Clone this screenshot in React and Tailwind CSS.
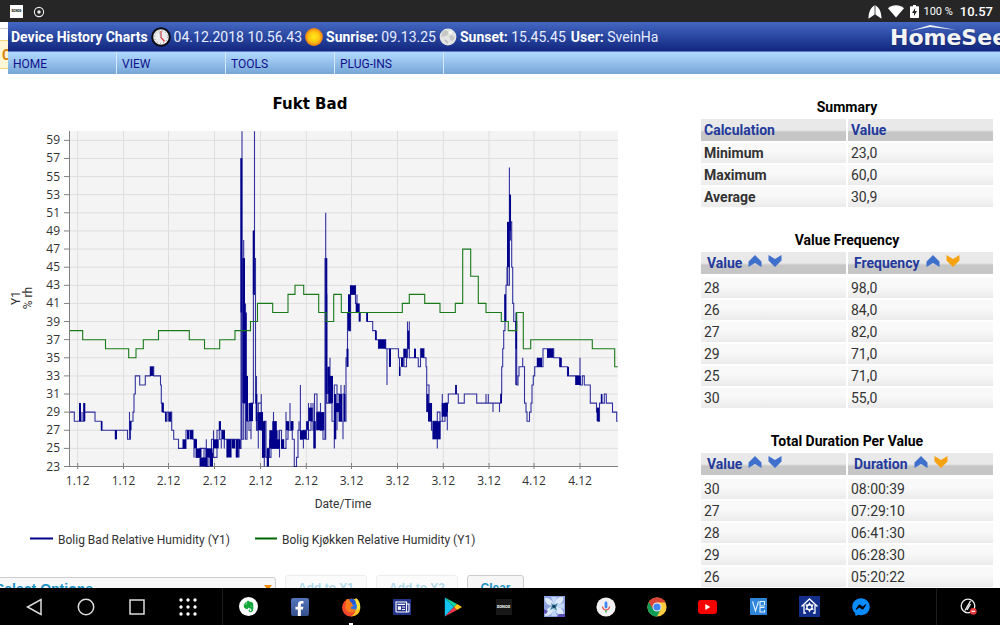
import { FaEvernote, FaFacebookF, FaFacebookMessenger } from "react-icons/fa";

// Plot geometry, in svg units
const X0 = 70;
const X1 = 618;
const yOf = (v) => 466.5 - (v - 23) * 9.06;

const yTicks = [59, 57, 55, 53, 51, 49, 47, 45, 43, 41, 39, 37, 35, 33, 31, 29, 27, 25, 23];
const xTicks = [
    [77.7, "1.12"], [123.5, "1.12"], [168.5, "2.12"], [214.5, "2.12"],
    [260.5, "2.12"], [306.3, "2.12"], [351.5, "3.12"], [397.5, "3.12"],
    [443.3, "3.12"], [489, "3.12"], [534, "4.12"], [580, "4.12"],
];

// Each point: x, then every value visited at that x
const kitchen = [
    [70, 38], [82.7, 37], [105.5, 36], [128.7, 35], [136, 36], [143.3, 37], [158.5, 38],
    [189.3, 37], [204.5, 36], [219.7, 37], [235, 38], [250.5, 39], [257.5, 41], [272.7, 40],
    [288, 42], [295, 43], [303.7, 42], [318.7, 40], [326, 39], [333.7, 42], [341.3, 40],
    [402.3, 41], [409.3, 42], [424.7, 41], [440, 40], [455.3, 41], [462.7, 47], [470.7, 44],
    [478.3, 41], [486, 40], [501.3, 39], [508.3, 38], [516.7, 40], [523.3, 36], [530.7, 37],
    [592.3, 36], [614.7, 34], [617.7, 34],
];

const bathroom = [
    [70, 29], [74.3, 28], [79.7, 30, 28], [82, 29, 28], [84, 30, 29], [95, 28], [101.3, 27],
    [115.3, 26, 27], [127.5, 26], [129.5, 29, 26], [130.5, 28], [133, 29], [134, 31],
    [135.3, 33], [139.7, 32], [145.3, 33], [150.3, 34], [153.7, 33], [160.5, 32], [161.3, 30],
    [163, 29], [165.5, 28], [167, 29], [169, 28], [170.7, 29], [171.7, 27], [173.7, 26],
    [178.5, 25], [186, 26, 25, 27], [193, 26], [194, 24, 26], [196, 25, 24], [200, 23, 25],
    [204, 23, 25], [206.3, 26, 23], [209, 25, 24], [211.5, 23, 26], [213.5, 27, 24], [217, 24, 27],
    [219.3, 28, 26], [221.3, 25, 27], [224.3, 25, 26], [227, 24, 26], [231, 24, 26],
    [234, 25, 26], [237, 24, 26], [239, 24, 26, 25], [241, 57], [242, 60, 26],
    [243.7, 48, 30], [245.5, 41, 26], [247, 33, 28], [249, 30, 27], [251, 26, 30], [253.4, 49],
    [254.5, 60, 42], [255.5, 46, 30], [256.5, 33, 27], [258.3, 25, 30], [261.3, 31, 27],
    [262.5, 29, 24], [264.3, 23, 28], [266, 28, 24], [268, 23, 25], [269.5, 26, 24],
    [271, 27, 25], [273.5, 29, 25], [275.5, 28, 25], [278, 27, 25], [279.5, 24, 27],
    [281.5, 27, 25], [283.7, 26, 25], [286, 29, 26], [288, 28, 27], [290, 30, 27],
    [292.3, 28, 26], [294.3, 23], [296.5, 24], [298, 27], [299, 28, 27], [300.4, 32, 26],
    [303.4, 25, 27], [306.5, 28, 26], [308.5, 30, 27], [311, 30, 28], [313, 30, 27],
    [314.5, 25, 31], [317, 27, 29], [320.5, 30, 27], [323, 29, 26], [325, 46, 26],
    [325.7, 51, 42], [326.8, 42, 30], [328.5, 34, 30], [330, 35, 30], [332, 33, 28],
    [334.3, 25, 32], [337, 27, 31], [339, 30, 28], [341, 32, 28], [343, 26, 31],
    [344.3, 32, 28], [346, 31, 35], [347.5, 34, 40], [349, 42, 38], [350.5, 43, 42],
    [355.5, 43, 41], [357, 42, 40], [359.5, 39, 40], [367, 39], [372.7, 38], [375.5, 37],
    [378.5, 36, 37], [385.7, 36], [387, 32, 36], [389.5, 34, 36], [398.5, 35], [399.5, 33, 35],
    [402, 34, 35], [404, 36, 34], [406.5, 36, 35], [407.5, 39, 36], [409.3, 39, 35],
    [414.7, 36, 35], [418.3, 34], [420.5, 35, 36], [424, 35], [426, 34], [426.7, 29, 32],
    [429, 31, 28], [431.5, 30, 27], [433, 26, 28], [437.3, 25, 29], [440, 26, 28],
    [442.3, 31, 28], [445, 28, 30], [447.3, 27, 30], [448.3, 31], [455.7, 32, 31], [458.3, 30],
    [464.3, 31], [476.7, 30], [486, 31, 30], [488.3, 31, 30], [493, 29, 30], [499.5, 29, 30],
    [501, 31], [501.7, 34], [502.7, 36], [503.7, 38], [505, 42, 39], [506, 43], [507, 45],
    [507.7, 50, 43], [509.4, 56, 48], [510.5, 53, 50], [511.7, 45], [512.7, 41], [513.7, 39],
    [515.7, 32, 39], [516.7, 32], [518, 33], [519, 34], [522.7, 35, 34], [524.5, 30],
    [526, 29], [527, 28], [529.5, 29], [531, 30], [532, 32], [533.3, 33], [534.7, 34],
    [537.3, 35, 34], [541, 35, 34], [543, 36], [548, 35, 36], [553.7, 35], [560, 34],
    [567.5, 33], [576, 32, 33], [580, 35, 32], [582.3, 33], [584.3, 32], [590.3, 30],
    [596.5, 29], [598, 28], [599.5, 30], [601.3, 31, 30], [604.3, 31], [606.3, 30],
    [612.5, 29], [616.7, 28], [617.7, 28],
];

// Solid stretches where the bathroom sensor toggles quickly: x, width, low, high
const bathroomFill = [
    [79, 2, 28, 30], [83.3, 2, 28, 30], [101, 1.5, 27, 28], [115, 2, 26, 27], [129.5, 2, 27, 28],
    [150, 3.5, 33, 34], [161.5, 2.3, 29, 30], [165, 1.6, 28, 29], [168.5, 2.5, 28, 29],
    [182.5, 3.5, 25, 26], [187, 2.5, 26, 27], [190, 3, 26, 27], [194, 3, 25, 26],
    [196, 5.5, 24, 25], [200, 7.5, 23, 24], [205.5, 2, 23, 25], [207, 5.5, 24, 25],
    [210, 3, 23, 24.5], [213, 5.7, 25, 26], [219, 2, 27, 28], [222, 3, 26, 27],
    [226.7, 4.5, 24, 26], [231.7, 3.5, 25, 26], [235.7, 3, 24, 26], [238.7, 2, 25, 26],
    [240.5, 1.8, 40, 57], [242.3, 2.7, 30, 46], [244, 2.8, 30, 40], [246, 2, 28, 33],
    [249, 4, 28, 30], [252.8, 1.8, 42, 49], [255.7, 1.7, 28, 31], [257.3, 3, 27, 29],
    [260, 3, 27, 29], [262, 3.5, 24, 28], [266.7, 2.3, 23, 25], [269.3, 8, 25, 27],
    [272.3, 4.5, 26, 28], [277, 3, 25, 26], [281, 3, 25, 26], [286, 3, 27, 28], [290.5, 3, 27, 28],
    [300, 6.3, 26, 27], [306.5, 2, 27, 28], [308.7, 4, 28, 29.5], [313.3, 2.5, 25, 28],
    [316.3, 8, 27, 29], [325.5, 1.8, 31, 46], [327.3, 2.5, 31, 34], [329, 4, 30, 33],
    [334, 2.3, 26, 31], [336, 6, 29, 30], [339, 3, 28, 31], [344, 1.5, 28, 31],
    [346.5, 2, 34, 36], [348, 2.5, 38, 42], [350, 5.7, 42, 43], [355.7, 4, 40, 41],
    [358.7, 2, 39, 40], [366.3, 1.7, 39, 40], [375.3, 1.5, 37, 38], [378.3, 7.5, 36, 37],
    [389, 2, 34, 36], [399, 1.5, 33, 34], [401, 2.5, 34, 35], [403.5, 3, 35, 36],
    [407.5, 1.8, 36, 38], [414, 2, 35, 36], [421, 3, 35, 36], [426.7, 2, 29, 31],
    [428, 4, 28, 30], [432.7, 7.7, 26, 28], [441.7, 5.5, 28.5, 30], [445, 3, 29, 30],
    [455.3, 1.6, 31, 32], [500.3, 1.7, 30, 31], [504.3, 1.6, 39, 42], [507, 2.5, 45, 50],
    [509.3, 1.7, 49, 53], [515.5, 1.5, 36, 40], [537, 5, 34, 35], [547, 6.5, 35, 36],
    [559.3, 2.5, 34, 35], [567.3, 1.7, 33, 34], [575.3, 5.5, 32, 33], [596.7, 2.5, 28, 29.5],
    [601, 1.5, 30, 31],
];

function toPath(points) {
    return points
        .map(([x, ...values], i) => {
            const rest = values.map((v) => `V${yOf(v).toFixed(1)}`).join("");
            return i === 0 ? `M${x} ${yOf(values[0]).toFixed(1)}` : `H${x}${rest}`;
        })
        .join("");
}

const summary = [["Minimum", "23,0"], ["Maximum", "60,0"], ["Average", "30,9"]];
const frequency = [["28", "98,0"], ["26", "84,0"], ["27", "82,0"], ["29", "71,0"], ["25", "71,0"], ["30", "55,0"]];
const duration = [["30", "08:00:39"], ["27", "07:29:10"], ["28", "06:41:30"], ["29", "06:28:30"], ["26", "05:20:22"]];

const headClass = "h-[22px] w-1/2 bg-linear-to-b from-[#e9e9e9] from-50% to-[#c6c6c6] to-60% p-0 text-left font-bold text-[#233a9c]";
const cellClass = "h-5 bg-linear-to-b from-[#f9f9f9] from-40% to-[#ebebeb] p-0 pl-[3px] leading-5";

function StatusBar() {
    return (
        <div className="flex h-[22px] shrink-0 items-center bg-[#262626] pt-px pr-[7px] pl-[10px] text-white">
            <span className="flex h-[13px] w-[13px] items-center justify-center bg-white text-[3px] font-bold text-black">SONOS</span>
            <svg className="ml-[10px] h-3 w-3" viewBox="0 0 12 12" fill="none" stroke="#eee">
                <circle cx="6" cy="6" r="4.6" strokeWidth="1.1" />
                <circle cx="6" cy="6" r="1.7" fill="#eee" stroke="none" />
            </svg>
            <div className="ml-auto flex items-center">
                <svg className="h-[14px] w-[14px]" viewBox="0 0 14 14" fill="#fff">
                    <path d="M6.6 .3C3 2.5 .6 6 .5 13.8L6.6 9.4zM7.4 .3c3.6 2.2 6 5.7 6.1 13.5L7.4 9.4z" />
                </svg>
                <svg className="ml-[6px] h-[13px] w-4" viewBox="0 0 16 13" fill="#fff">
                    <path d="M8 12.6L0 3.2C4.6-.6 11.4-.6 16 3.2z" />
                </svg>
                <svg className="ml-[6px] h-[13px] w-[9px]" viewBox="0 0 9 13">
                    <path d="M3 0h3v1.3h2.3q.7 0 .7.7v10.3q0 .7-.7.7H.7q-.7 0-.7-.7V2q0-.7.7-.7H3z" fill="#fff" />
                    <path d="M5.2 3L2 8h2v3l3-5H5z" fill="#262626" />
                </svg>
                <span className="ml-1 pt-px text-[11px] leading-4">100 %</span>
                <span className="ml-[7px] pt-px text-[13px] leading-4 font-medium">10.57</span>
            </div>
        </div>
    );
}

function ClockIcon() {
    return (
        <svg className="h-5 w-5" viewBox="0 0 20 20">
            <circle cx="10" cy="10" r="8.8" fill="#ededed" stroke="#0b0b14" strokeWidth="2" />
            <circle cx="10" cy="10" r="6.4" fill="none" stroke="#777" strokeDasharray=".8 2.55" />
            <path d="M10 4v6.5l3.5 4" fill="none" stroke="#e03a3a" strokeWidth="1.2" />
            <path d="M10 10.5L8.6 5" stroke="#999" strokeWidth=".8" />
        </svg>
    );
}

function SunIcon() {
    return (
        <svg className="h-[18px] w-[18px]" viewBox="0 0 18 18">
            <defs>
                <radialGradient id="sun">
                    <stop offset="0" stopColor="#ffe81a" />
                    <stop offset=".6" stopColor="#ffc410" />
                    <stop offset="1" stopColor="#f07a18" />
                </radialGradient>
            </defs>
            <circle cx="9" cy="9" r="8.9" fill="url(#sun)" />
        </svg>
    );
}

function MoonIcon() {
    return (
        <svg className="h-[18px] w-[18px]" viewBox="0 0 18 18">
            <circle cx="9" cy="9" r="8.4" fill="#e4e4e4" />
            <path d="M4 3q4-2 5 1t-3 4-4 0zM10 8q4-2 5 1t-3 4zM5 12q3-1 4 2t-2 1z" fill="#c6c6c6" />
            <circle cx="11.5" cy="4.5" r="1.6" fill="#f8f8f8" />
        </svg>
    );
}

function Header() {
    return (
        <div className="flex min-w-0 flex-1 flex-col">
            <div className="flex h-[30px] items-center overflow-hidden border-b border-[#5a7cc6] bg-linear-to-b from-[#4468c3] to-[#13267f] pl-[3px] text-sm whitespace-nowrap text-[#e8edff]">
                <h1 className="font-bold text-white">Device History Charts</h1>
                <div className="ml-[3px] flex items-center gap-[3px]">
                    <ClockIcon />
                    <span>04.12.2018 10.56.43</span>
                </div>
                <div className="ml-[3px] flex items-center gap-[3px]">
                    <SunIcon />
                    <span><b className="text-white">Sunrise:</b> 09.13.25</span>
                </div>
                <div className="ml-[3px] flex items-center gap-[3px]">
                    <MoonIcon />
                    <span><b className="text-white">Sunset:</b> 15.45.45</span>
                </div>
                <span className="ml-[5px]"><b className="text-white">User:</b> SveinHa</span>
                {/* Logo, runs past the right edge */}
                <div className="relative ml-auto w-[110px] shrink-0 overflow-hidden pt-[2px] font-['DejaVu_Sans',sans-serif] text-[22px] leading-7 font-bold text-[#f4f4f4] text-shadow-md">
                    HomeSeer
                    <svg className="absolute top-[3px] left-5 h-[6px] w-12" viewBox="0 0 48 6">
                        <path d="M0 6L20 0L46 5L20 2z" fill="#f4f4f4" />
                    </svg>
                </div>
            </div>
            <nav className="flex h-[22px] bg-linear-to-b from-[#b2daff] to-[#76a6d6] text-xs leading-6 text-[#10108c]">
                {["HOME", "VIEW", "TOOLS", "PLUG-INS"].map((item) => (
                    <a key={item} href="#" className="w-[109px] border-r border-[#d4e8fc] pl-[5px]">
                        {item}
                    </a>
                ))}
            </nav>
        </div>
    );
}

function Chart() {
    return (
        <svg className="h-[440px] w-[640px] shrink-0 font-['Open_Sans',sans-serif] text-xs" viewBox="0 120 640 440" fill="#333">
            <rect x={X0} y="131" width={X1 - X0} height="336" fill="#f4f4f4" />
            {yTicks.map((v) => (
                <g key={v}>
                    <line x1={X0} x2={X1} y1={yOf(v)} y2={yOf(v)} stroke="#dedede" />
                    <line x1="64" x2={X0} y1={yOf(v)} y2={yOf(v)} stroke="#808080" />
                    <text x="60" y={yOf(v) + 4} textAnchor="end">{v}</text>
                </g>
            ))}
            {xTicks.map(([x, label]) => (
                <g key={x}>
                    <line x1={x} x2={x} y1="131" y2="466" stroke="#dedede" />
                    <line x1={x} x2={x} y1="463" y2="469" stroke="#808080" />
                    <text x={x} y="485" textAnchor="middle">{label}</text>
                </g>
            ))}
            <path d="M69.5 131V466.5H618" fill="none" stroke="#808080" />
            <path d={toPath(bathroom)} fill="none" stroke="#00008b" strokeOpacity=".8" strokeWidth="1.1" />
            {bathroomFill.map(([x, w, low, high], i) => (
                <rect key={i} x={x} y={yOf(high)} width={w} height={yOf(low) - yOf(high)} fill="#00008b" />
            ))}
            <path d={toPath(kitchen)} fill="none" stroke="#187a18" strokeWidth="1.1" />

            <g className="font-[Roboto,sans-serif]">
                <text x="343" y="508" textAnchor="middle">Date/Time</text>
                <text transform="translate(20 298) rotate(-90)" textAnchor="middle">Y1</text>
                <text transform="translate(32 298) rotate(-90)" textAnchor="middle">% rh</text>
                <line x1="30" x2="53" y1="538.5" y2="538.5" stroke="#00008b" strokeWidth="2" />
                <text x="58" y="544">Bolig Bad Relative Humidity (Y1)</text>
                <line x1="255" x2="277" y1="538.5" y2="538.5" stroke="#006400" strokeWidth="2" />
                <text x="282" y="544">Bolig Kjøkken Relative Humidity (Y1)</text>
            </g>
        </svg>
    );
}

function Chevron({ down, orange }) {
    return (
        <svg className={down ? "h-3 w-[14px] rotate-180" : "h-3 w-[14px]"} viewBox="0 0 14 12">
            <path d="M7 0L13.5 6.5V12L7 8L.5 12V6.5z" fill={orange ? "#f5a312" : "#3f70cc"} />
        </svg>
    );
}

function SortHead({ label, active }) {
    return (
        <th scope="col" className={headClass}>
            <div className="flex items-center pl-[6px]">
                {label}
                <button type="button" aria-label={`Sort ${label} ascending`} className="-mt-1 ml-[6px]">
                    <Chevron />
                </button>
                <button type="button" aria-label={`Sort ${label} descending`} className="-mt-1 ml-[6px]">
                    <Chevron down orange={active} />
                </button>
            </div>
        </th>
    );
}

function SortTable({ title, column, rows }) {
    return (
        <section className="mt-[21px]">
            <h2 className="text-center leading-5 font-bold text-black">{title}</h2>
            <table className="w-full table-fixed border-separate border-spacing-[2px]">
                <thead>
                    <tr>
                        <SortHead label="Value" />
                        <SortHead label={column} active />
                    </tr>
                    <tr />
                </thead>
                <tbody>
                    {rows.map(([value, total]) => (
                        <tr key={value}>
                            <td className={cellClass}>{value}</td>
                            <td className={cellClass}>{total}</td>
                        </tr>
                    ))}
                </tbody>
            </table>
        </section>
    );
}

const uiButton = "h-[26px] rounded-[3px] border border-[#ccc] bg-[#f6f6f6] text-xs font-bold text-[#1c94c4] disabled:opacity-35";

function ChartControls() {
    return (
        <div className="-ml-[6px] flex items-start gap-[9px] pt-[15px] font-['Liberation_Sans',sans-serif]">
            <div className="relative mt-[2px] w-[282px]">
                <select aria-label="Options" className="block h-6 w-full appearance-none rounded-[3px] border border-[#ccc] bg-[#f8f8f8] text-sm font-bold text-[#1c94c4]">
                    <option>Select Options</option>
                </select>
                <svg className="pointer-events-none absolute top-2 right-1 h-[5px] w-2" viewBox="0 0 8 5">
                    <path d="M0 0h8L4 5z" fill="#ef8c08" />
                </svg>
            </div>
            <button type="button" disabled className={`${uiButton} w-[82px]`}>Add to Y1</button>
            <button type="button" disabled className={`${uiButton} w-[82px]`}>Add to Y2</button>
            <button type="button" className={`${uiButton} w-[57px]`}>Clear</button>
        </div>
    );
}

const dots = [2, 9, 16];

const systemKeys = [
    ["Back", <path key="b" d="M16 2.5V17.5L2.5 10z" fill="none" stroke="#ddd" strokeWidth="1.5" />],
    ["Home", <circle key="h" cx="10" cy="10" r="7.7" fill="none" stroke="#ddd" strokeWidth="1.5" />],
    ["Recents", <rect key="r" x="3" y="3" width="14" height="14" fill="none" stroke="#ddd" strokeWidth="1.5" />],
    ["All apps", dots.map((x) => dots.map((y) => <circle key={`${x}-${y}`} cx={x + 1} cy={y + 1} r="1.7" fill="#fff" />))],
];

const apps = [
    ["Evernote", (
        <span className="flex h-[19px] w-[19px] items-center justify-center rounded-full bg-white text-[#14a83c]">
            <FaEvernote size={13} />
        </span>
    )],
    ["Facebook", (
        <span className="flex h-[18px] w-[18px] items-end justify-end rounded-[2px] bg-linear-to-b from-[#5576bd] to-[#35508d] pr-[2px] text-white">
            <FaFacebookF size={15} />
        </span>
    )],
    ["Firefox", (
        <svg className="h-5 w-5" viewBox="0 0 20 20">
            <circle cx="10" cy="10.6" r="9" fill="#f8492c" />
            <path d="M12 1.5Q19.8 4 19.2 11.5T10 19.6Q15 17 14.6 9z" fill="#ffc420" />
            <path d="M15.2 1q5 4 3.8 11l-4 1L12.5 4z" fill="#ffe03a" />
            <circle cx="10.4" cy="9.4" r="5.6" fill="#2a6fe8" />
            <path d="M5 2.5Q9.5 1 12 4L11 7.5 13 9q-3 0-3.5 2.2 3 2.2 5 .2-.6 4.2-5 4.2Q5 15 4.4 10z" fill="#ff7a18" />
            <path d="M8 2.2q5-1.6 7 3L13 7.6 9.5 5z" fill="#1f55d0" />
        </svg>
    )],
    ["News", (
        <svg className="h-4 w-[18px]" viewBox="0 0 18 16">
            <rect width="18" height="16" rx="1" fill="#25358c" />
            <path d="M3 3h10.5v10H4q-1 0-1-1zM13.5 5H16v7q0 1-1.2 1H13" fill="none" stroke="#fff" strokeWidth="1.1" />
            <path d="M4.5 5.4h7.5M9 8h3M9 10.5h3" stroke="#fff" strokeWidth="1.1" />
            <path d="M4.8 7.3h3.2v3.5H4.8z" fill="#fff" />
        </svg>
    )],
    ["Play Store", (
        <svg className="h-5 w-[18px]" viewBox="0 0 18 20">
            <path d="M.8.5L10 10 .8 19.5z" fill="#13c3f0" />
            <path d="M.8.5L13 7l-3 3z" fill="#12d6a0" />
            <path d="M.8 19.5L13 13l-3-3z" fill="#f0384a" />
            <path d="M13 7l5 3-5 3-3-3z" fill="#ffc81a" />
        </svg>
    )],
    ["Sonos", <span className="flex h-4 w-4 items-center justify-center bg-[#171717] text-[4px] font-bold text-white">SONOS</span>],
    ["Gallery", (
        <svg className="h-[21px] w-[21px]" viewBox="0 0 21 21">
            <rect width="21" height="21" fill="#8da3e0" />
            <path d="M10 10Q0 9 1 2q7-1 9 8Q11 0 19 1q2 7-9 9 10 1 10 9-8 1-10-8-1 9-9 9 0-9 9-10z" fill="#dce9fb" />
            <path d="M10 9L7 1h6zM11 10l9-3v6zM10 12l3 8H7z" fill="#c3d8f6" />
            <path d="M0 13l4 2-2 3-2-1zM15 18l6 0v3h-8z" fill="#5a4fb8" />
            <path d="M7 7l3 2 4-2-2 4 1 4-3-3-4 2 2-4z" fill="#357f96" />
            <circle cx="10" cy="10.5" r="1.4" fill="#17345e" />
        </svg>
    )],
    ["Voice Search", (
        <svg className="h-5 w-5" viewBox="0 0 20 20">
            <circle cx="10" cy="10" r="9.6" fill="#f1f1f1" />
            <path d="M6.5 9.5Q7 13 10 13t3.5-3.5" fill="none" stroke="#ea4335" strokeWidth="1.2" />
            <rect x="8.6" y="4.5" width="2.8" height="7" rx="1.4" fill="#4285f4" />
            <path d="M10 13v2.5" stroke="#34a853" strokeWidth="1.4" />
        </svg>
    )],
    ["Chrome", (
        <svg className="h-5 w-5" viewBox="0 0 20 20">
            <circle cx="10" cy="10" r="9.6" fill="#ffcd40" />
            <path d="M10 10L1.7 5.2A9.6 9.6 0 0 0 10 19.6l3.7-7z" fill="#0f9d58" />
            <path d="M10 5.6h8.5A9.6 9.6 0 0 0 1.7 5.2L6 12z" fill="#db4437" />
            <circle cx="10" cy="10" r="4.5" fill="#f1f1f1" />
            <circle cx="10" cy="10" r="3.6" fill="#4285f4" />
        </svg>
    )],
    ["YouTube", (
        <svg className="h-[14px] w-[19px]" viewBox="0 0 19 14">
            <rect width="19" height="14" rx="3" fill="#f60000" />
            <path d="M7.3 4v6l5-3z" fill="#fff" />
        </svg>
    )],
    ["VLC Remote", (
        <svg className="h-[17px] w-[17px]" viewBox="0 0 17 17">
            <rect width="17" height="17" rx="1" fill="#2f86d9" />
            <path d="M2.5 3.5L5.5 13 8.5 3.5M14.5 7V3.5H10V8h4.5M14.5 9.5H10V14h4.5v-2" fill="none" stroke="#e4f1ff" strokeWidth="1.1" />
        </svg>
    )],
    ["HomeSeer", (
        <svg className="h-[21px] w-[21px]" viewBox="0 0 21 21">
            <rect width="21" height="21" fill="#142f8c" />
            <path d="M2.5 10.5L10.5 3l8 7.5M5 9v8h2M16 9v8h-2" fill="none" stroke="#fff" strokeWidth="1.3" />
            <path d="M10.5 6l1.3 2.3 2.9.1-1.2 2.7 1.2 2.7-2.9.1-1.3 2.6-1.3-2.6-2.9-.1 1.2-2.7-1.2-2.7 2.9-.1z" fill="#fff" />
            <circle cx="10.5" cy="11.2" r="1.8" fill="#142f8c" />
        </svg>
    )],
    ["Messenger", (
        <span className="text-[#0a8cff]">
            <FaFacebookMessenger size={18} />
        </span>
    )],
];

function BottomBar() {
    return (
        <footer className="flex h-[37px] shrink-0 bg-black">
            <div className="flex w-[223px] border-r border-[#1c1c1c] pl-[9px]">
                {systemKeys.map(([label, icon]) => (
                    <button key={label} type="button" aria-label={label} className="flex w-[51px] items-center justify-center">
                        <svg className="h-5 w-5" viewBox="0 0 20 20">{icon}</svg>
                    </button>
                ))}
            </div>
            <div className="flex flex-1">
                {apps.map(([label, icon]) => (
                    <button key={label} type="button" aria-label={label} className="relative flex w-[51px] items-center justify-center">
                        {icon}
                        {label === "Firefox" && <span className="absolute bottom-0 h-[2px] w-1 bg-white" />}
                    </button>
                ))}
            </div>
            <button type="button" aria-label="Do not disturb" className="flex w-16 items-center justify-center border-l border-[#1c1c1c]">
                <svg className="h-[17px] w-[17px]" viewBox="0 0 17 17">
                    <circle cx="8" cy="8" r="6.8" fill="none" stroke="#eee" strokeWidth="1.3" />
                    <path d="M10.5 3L5 12.5M7 12l3.5-6" stroke="#eee" strokeWidth="1.4" />
                    <circle cx="13.3" cy="13.3" r="3.4" fill="#e83a3a" />
                    <path d="M11.5 13.3h3.6" stroke="#fff" strokeWidth="1.2" />
                </svg>
            </button>
        </footer>
    );
}

function App() {
    return (
        <div className="flex h-screen flex-col overflow-hidden bg-white font-[Roboto,sans-serif] text-sm text-[#333]">
            <StatusBar />
            <div className="flex shrink-0">
                {/* Edge of the page underneath */}
                <div className="h-[52px] w-2 overflow-hidden">
                    <div className="h-[7px] border-b border-[#ccc]" />
                    <div className="mt-[11px] h-[29px] border-y border-[#f6da78] bg-[#fff7d6] pl-[2px] leading-7 font-bold text-[#d9820f]">C</div>
                </div>
                <Header />
            </div>

            <main className="flex min-h-0 flex-1 overflow-hidden">
                <div className="min-w-0 flex-1">
                    <h2 className="h-[46px] w-[620px] pt-5 text-center font-['DejaVu_Sans',sans-serif] text-[15px] leading-5 font-bold text-black">
                        Fukt Bad
                    </h2>
                    <Chart />
                    <ChartControls />
                </div>

                <div className="mr-[5px] w-[296px] shrink-0 pt-[23px]">
                    <section>
                        <h2 className="text-center leading-5 font-bold text-black">Summary</h2>
                        <table className="w-full table-fixed border-separate border-spacing-[2px]">
                            <thead>
                                <tr>
                                    <th scope="col" className={`${headClass} pl-[3px]`}>Calculation</th>
                                    <th scope="col" className={`${headClass} pl-[3px]`}>Value</th>
                                </tr>
                            </thead>
                            <tbody>
                                {summary.map(([name, value]) => (
                                    <tr key={name}>
                                        <th scope="row" className={`${cellClass} text-left font-bold`}>{name}</th>
                                        <td className={cellClass}>{value}</td>
                                    </tr>
                                ))}
                            </tbody>
                        </table>
                    </section>
                    <SortTable title="Value Frequency" column="Frequency" rows={frequency} />
                    <SortTable title="Total Duration Per Value" column="Duration" rows={duration} />
                </div>
            </main>
            <BottomBar />
        </div>
    );
}

export default App;
